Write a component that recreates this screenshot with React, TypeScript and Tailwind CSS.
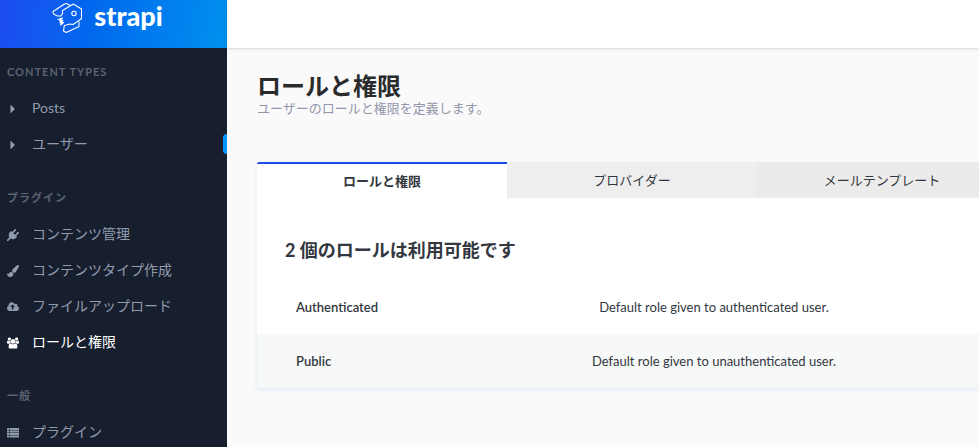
import * as React from "react"

interface IconProps {
  viewBox: string;
  path: string;
}

interface MenuItem {
  name: string;
  icon: IconProps;
  active?: boolean;
  marker?: boolean;
}

interface MenuSection {
  title: string;
  items: MenuItem[];
}

const caret: IconProps = {
  viewBox: "-448 112 1568 1568",
  path: "M576 896q0 26-19 45l-448 448q-19 19-45 19t-45-19-19-45v-896q0-26 19-45t45-19 45 19l448 448q19 19 19 45z",
}
const plug: IconProps = {
  viewBox: "0 0 1792 1792",
  path: "M1755 453q37 38 37 90.5t-37 90.5l-401 400 150 150-160 160q-163 163-389.5 186.5t-411.5-100.5l-362 362h-181v-181l362-362q-124-185-100.5-411.5t186.5-389.5l160-160 150 150 400-401q38-37 91-37t90 37 37 90.5-37 90.5l-400 401 234 234 401-400q38-37 91-37t90 37z",
}
const brush: IconProps = {
  viewBox: "0 0 1792 1792",
  path: "M1615 0q70 0 122.5 46.5t52.5 116.5q0 63-45 151-332 629-465 752-97 91-218 91-126 0-216.5-92.5t-90.5-219.5q0-128 92-212l638-579q59-54 130-54zm-909 1034q39 76 106.5 130t150.5 76l1 71q4 213-129.5 347t-348.5 134q-123 0-218-46.5t-152.5-127.5-86.5-183-29-220q7 5 41 30t62 44.5 59 36.5 46 17q41 0 55-37 25-66 57.5-112.5t69.5-76 88-47.5 103-25.5 125-10.5z",
}
const cloud: IconProps = {
  viewBox: "-64 0 1920 1792",
  path: "M1216 864q0-14-9-23l-352-352q-9-9-23-9t-23 9l-351 351q-10 12-10 24 0 14 9 23t23 9h224v352q0 13 9.5 22.5t22.5 9.5h192q13 0 22.5-9.5t9.5-22.5v-352h224q13 0 22.5-9.5t9.5-22.5zm640 288q0 159-112.5 271.5t-271.5 112.5h-1088q-185 0-316.5-131.5t-131.5-316.5q0-130 70-240t188-165q-2-30-2-43 0-212 150-362t362-150q156 0 285.5 87t188.5 231q71-62 166-62 106 0 181 75t75 181q0 76-41 138 130 31 213.5 135.5t83.5 238.5z",
}
const users: IconProps = {
  viewBox: "0 0 1920 1792",
  path: "M593 896q-162 5-265 128h-134q-82 0-138-40.5t-56-118.5q0-353 124-353 6 0 43.5 21t97.5 42.5 119 21.5q67 0 133-23-5 37-5 66 0 139 81 256zm1071 637q0 120-73 189.5t-194 69.5h-874q-121 0-194-69.5t-73-189.5q0-53 3.5-103.5t14-109 26.5-108.5 43-97.5 62-81 85.5-53.5 111.5-20q10 0 43 21.5t73 48 107 48 135 21.5 135-21.5 107-48 73-48 43-21.5q61 0 111.5 20t85.5 53.5 62 81 43 97.5 26.5 108.5 14 109 3.5 103.5zm-1024-1277q0 106-75 181t-181 75-181-75-75-181 75-181 181-75 181 75 75 181zm704 384q0 159-112.5 271.5t-271.5 112.5-271.5-112.5-112.5-271.5 112.5-271.5 271.5-112.5 271.5 112.5 112.5 271.5zm576 225q0 78-56 118.5t-138 40.5h-134q-103-123-265-128 81-117 81-256 0-29-5-66 66 23 133 23 59 0 119-21.5t97.5-42.5 43.5-21q124 0 124 353zm-128-609q0 106-75 181t-181 75-181-75-75-181 75-181 181-75 181 75 75 181z",
}
const list: IconProps = {
  viewBox: "0 0 12 12",
  path: "M0 1h2v2H0zM2.500 1H12v2H2.500zM0 3.500h2v2H0zM2.500 3.500H12v2H2.500zM0 6h2v2H0zM2.500 6H12v2H2.500zM0 8.500h2v2H0zM2.500 8.500H12v2H2.500z",
}

const sections: MenuSection[] = [
  {
    title: "Content Types",
    items: [
      { name: "Posts", icon: caret },
      { name: "ユーザー", icon: caret, marker: true },
    ],
  },
  {
    title: "プラグイン",
    items: [
      { name: "コンテンツ管理", icon: plug },
      { name: "コンテンツタイプ作成", icon: brush },
      { name: "ファイルアップロード", icon: cloud },
      { name: "ロールと権限", icon: users, active: true },
    ],
  },
  {
    title: "一般",
    items: [{ name: "プラグイン", icon: list }],
  },
]

const tabs = ["ロールと権限", "プロバイダー", "メールテンプレート"]

const roles = [
  { name: "Authenticated", description: "Default role given to authenticated user." },
  { name: "Public", description: "Default role given to unauthenticated user." },
]

const Icon = ({ viewBox, path }: IconProps) => (
  <svg viewBox={viewBox} className="mt-px size-3 shrink-0" fill="currentColor" aria-hidden="true">
    <path d={path} />
  </svg>
)

const Logo = () => (
  <a href="#" className="flex h-12 items-start justify-center gap-3 bg-linear-100 from-[#1c4bf0] via-[#0068ee] via-40% to-[#0090ee] pr-3 text-white">
    <svg viewBox="0 0 30 32" className="mt-0.5 h-8 w-[30px]" fill="none" stroke="currentColor" strokeWidth="1.1" strokeLinejoin="round" strokeLinecap="round" aria-hidden="true">
      <path d="M1 9.500 12.500 2l2-.5 3 1.500M1 9.500l.5 2.500 4 2h3.500l1.500-2.500V8.500L21.300 2l8.200 5v9.700l-8.500 5.800-3-.5-5.700 1.500-.8 5.500 2.800 1.500L27 24.500V20" />
      <circle cx="22" cy="11.500" r="2.200" />
      <path d="m6 17.500 4.500-1.500-3 3 3.500-.5-3 2.500 3.500-.5-3 2.500" />
    </svg>
    <span className="text-[27px] leading-8 font-black">strapi</span>
  </a>
)

const SideMenu = () => (
  <aside className="w-[227px] shrink-0 bg-[#171f2f]">
    <Logo />
    <nav className="flex flex-col gap-[18px] pt-1.5">
      {sections.map(section => (
        <section key={section.title}>
          <h2 className="flex h-9 items-center pl-[7px] text-[11px] font-bold tracking-[1px] text-[#5b6270] uppercase">
            {section.title}
          </h2>
          <ul>
            {section.items.map(item => (
              <li key={item.name} className="relative">
                <a
                  href="#"
                  className={`flex h-9 items-center gap-[13px] pl-[7px] text-sm ${item.active ? "text-white" : "text-[#919bae]"}`}
                >
                  <Icon {...item.icon} />
                  {item.name}
                </a>
                {item.marker && <span className="absolute top-2 right-0 h-5 w-1 rounded-l-sm bg-[#0097ff]" />}
              </li>
            ))}
          </ul>
        </section>
      ))}
    </nav>
  </aside>
)

export default function App() {
  const [current, setCurrent] = React.useState(0)

  return (
    <div className="flex h-screen overflow-hidden bg-[#fafafb] font-['Lato','Noto_Sans_CJK_JP',sans-serif] text-[#333740]">
      <SideMenu />
      <div className="min-w-0 flex-1">
        <header className="h-12 bg-white shadow-[0_1px_2px_rgba(40,42,49,0.16)]" />
        <main className="pt-6 pl-[30px]">
          <h1 className="text-2xl leading-7 font-bold text-[#292b2c]">ロールと権限</h1>
          <p className="text-[13px] leading-4 text-[#9397ab]">ユーザーのロールと権限を定義します。</p>
          <div className="mt-[46px] rounded-[2px] bg-white shadow-[0_2px_4px_#e3e9f3]">
            <div role="tablist" className="flex overflow-hidden rounded-t-[2px]">
              {tabs.map((tab, i) => (
                <button
                  key={tab}
                  type="button"
                  role="tab"
                  aria-selected={i === current}
                  onClick={() => setCurrent(i)}
                  className={`h-9 w-[250px] shrink-0 pt-px text-[13px] ${i === current ? "border-t-2 border-[#1c4bee] bg-white font-bold" : "bg-[#eeeeee] last:bg-[#ebebeb]"}`}
                >
                  {tab}
                </button>
              ))}
            </div>
            <h2 className="px-7 pt-10 pb-[18px] text-lg leading-6 font-bold">2 個のロールは利用可能です</h2>
            <table className="w-full text-[13px]">
              <tbody>
                {roles.map(role => (
                  <tr key={role.name} className="h-[54px] even:bg-[#f7f8f8]">
                    <th scope="row" className="w-48 pt-0.5 pl-[39px] text-left font-semibold">{role.name}</th>
                    <td className="pt-0.5 text-center">{role.description}</td>
                  </tr>
                ))}
              </tbody>
            </table>
          </div>
        </main>
      </div>
    </div>
  )
}
